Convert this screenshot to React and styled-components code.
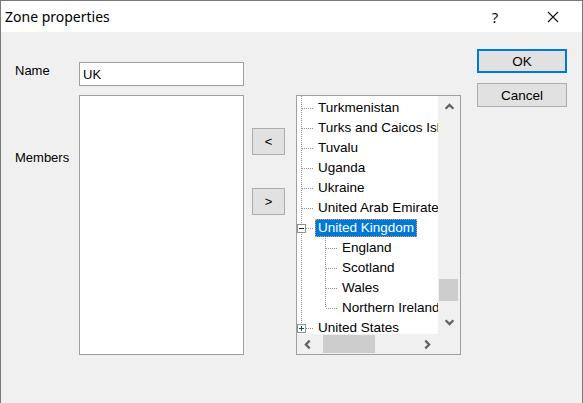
import React from "react";
import styled, { createGlobalStyle, css } from "styled-components";

const GlobalStyle = createGlobalStyle`
	html, body {
		margin: 0;
		padding: 0;
		background: #f0f0f0;
	}
	* {
		box-sizing: border-box;
	}
`;

const dotsV = "repeating-linear-gradient(to bottom, #8f8f8f 0 1px, transparent 1px 2px)";
const dotsH = "repeating-linear-gradient(to right, #8f8f8f 0 1px, transparent 1px 2px)";

const countries = [
	{ label: "Turkmenistan", level: 0 },
	{ label: "Turks and Caicos Islands", level: 0 },
	{ label: "Tuvalu", level: 0 },
	{ label: "Uganda", level: 0 },
	{ label: "Ukraine", level: 0 },
	{ label: "United Arab Emirates", level: 0 },
	{ label: "United Kingdom", level: 0, box: "minus", selected: true },
	{ label: "England", level: 1 },
	{ label: "Scotland", level: 1 },
	{ label: "Wales", level: 1 },
	{ label: "Northern Ireland", level: 1, last: true },
	{ label: "United States", level: 0, box: "plus" },
];

function Chevron({ dir }) {
	const rot = { up: 0, right: 90, down: 180, left: 270 }[dir];
	return (
		<svg width="11" height="11" viewBox="0 0 10 10" style={{ transform: `rotate(${rot}deg)` }}>
			<polyline points="1.5,7 5,3.5 8.5,7" fill="none" stroke="#606060" strokeWidth="2" />
		</svg>
	);
}

function ExpandIcon({ kind }) {
	return (
		<svg width="9" height="9" viewBox="0 0 9 9">
			<rect x="0.5" y="0.5" width="8" height="8" fill="#fff" stroke="#919191" />
			<line x1="2" y1="4.5" x2="7" y2="4.5" stroke={kind === "plus" ? "#1e3a8a" : "#222"} />
			{kind === "plus" && <line x1="4.5" y1="2" x2="4.5" y2="7" stroke="#1e3a8a" />}
		</svg>
	);
}

export default function App() {
	return (
		<>
			<GlobalStyle />
			<Window>
				<TitleBar>
					<Title>Zone properties</Title>
					<CaptionButton>?</CaptionButton>
					<CaptionButton>
						<svg width="12" height="12" viewBox="0 0 12 12">
							<path d="M1 1 L11 11 M11 1 L1 11" stroke="#111" strokeWidth="1.1" />
						</svg>
					</CaptionButton>
				</TitleBar>
				<Body>
					<FormGrid>
						<Label $top={1}>Name</Label>
						<TextInput defaultValue="UK" />
						<Label $top={55}>Members</Label>
						<MemberList />
					</FormGrid>

					<ArrowColumn>
						<SmallButton>&lt;</SmallButton>
						<SmallButton>&gt;</SmallButton>
					</ArrowColumn>

					<Tree>
						<Viewport>
							{countries.map((c) => (
								<Row key={c.label} $level={c.level}>
									<Gutter $level={c.level} $last={c.last}>
										{c.box && <ExpandIcon kind={c.box} />}
									</Gutter>
									<ItemText $selected={c.selected}>{c.label}</ItemText>
								</Row>
							))}
						</Viewport>
						<VScroll>
							<ArrowCell $h={21}><Chevron dir="up" /></ArrowCell>
							<Track>
								<VThumb style={{ marginTop: 162 }} />
							</Track>
							<ArrowCell $h={23}><Chevron dir="down" /></ArrowCell>
						</VScroll>
						<HScroll>
							<ArrowCell $w={21}><Chevron dir="left" /></ArrowCell>
							<HTrack>
								<HThumb style={{ marginLeft: 5 }} />
							</HTrack>
							<ArrowCell $w={21}><Chevron dir="right" /></ArrowCell>
						</HScroll>
						<Corner />
					</Tree>

					<DialogButtons>
						<PushButton $default>OK</PushButton>
						<PushButton>Cancel</PushButton>
					</DialogButtons>
				</Body>
			</Window>
		</>
	);
}

const Window = styled.div`
	width: 583px;
	height: 403px;
	background: #f0f0f0;
	border: 1px solid #7a7a7a;
	border-bottom: none;
	font-family: "Liberation Sans", Arial, sans-serif;
	font-size: 13px;
	color: #000;
	overflow: hidden;
`;

const TitleBar = styled.div`
	height: 31px;
	background: #fff;
	display: flex;
	align-items: center;
	gap: 12px;
	padding-right: 6px;
`;

const Title = styled.div`
	flex: 1;
	padding-left: 4px;
	font-family: "Noto Sans", "Open Sans", sans-serif;
	font-size: 14px;
	color: #000;
`;

const CaptionButton = styled.div`
	width: 46px;
	height: 31px;
	display: flex;
	align-items: center;
	justify-content: center;
	font-family: "Noto Sans", sans-serif;
	font-size: 15px;
	color: #111;
`;

const Body = styled.div`
	display: flex;
	align-items: flex-start;
	padding-left: 14px;
`;

const FormGrid = styled.div`
	display: grid;
	grid-template-columns: 64px 165px;
	grid-template-rows: 24px 260px;
	row-gap: 9px;
	margin-top: 30px;
`;

const Label = styled.div`
	padding-top: ${(p) => p.$top}px;
	line-height: 15px;
`;

const TextInput = styled.input`
	height: 24px;
	width: 100%;
	margin: 0;
	border: 1px solid #a0a0a0;
	background: #fff;
	padding: 0 3px;
	font-family: "Liberation Sans", Arial, sans-serif;
	font-size: 13px;
	color: #000;
	outline: none;
`;

const MemberList = styled.div`
	background: #fff;
	border: 1px solid #a0a0a0;
`;

const ArrowColumn = styled.div`
	display: flex;
	flex-direction: column;
	gap: 33px;
	margin: 96px 0 0 8px;
`;

const buttonFace = css`
	background: #e1e1e1;
	border: 1px solid #adadad;
	display: flex;
	align-items: center;
	justify-content: center;
	font-family: "Liberation Sans", Arial, sans-serif;
	color: #000;
`;

const SmallButton = styled.div`
	${buttonFace};
	width: 33px;
	height: 27px;
	font-size: 13px;
`;

const Tree = styled.div`
	display: grid;
	grid-template-columns: 141px 22px;
	grid-template-rows: 238px 20px;
	width: 165px;
	height: 260px;
	margin: 63px 0 0 11px;
	border: 1px solid #a0a0a0;
	background: #fff;
`;

const Viewport = styled.div`
	overflow: hidden;
	padding-top: 2px;
	background-image: ${dotsV};
	background-size: 1px 100%;
	background-position: 4px 0;
	background-repeat: no-repeat;
	font-size: 13.5px;
`;

const Row = styled.div`
	display: flex;
	align-items: center;
	height: 20px;
	padding-left: ${(p) => p.$level * 24}px;
	white-space: nowrap;
`;

const Gutter = styled.div`
	flex: none;
	width: 18px;
	height: 20px;
	display: flex;
	align-items: center;
	background-repeat: no-repeat;
	background-image: ${(p) => (p.$level > 0 ? `${dotsH}, ${dotsV}` : dotsH)};
	background-size: ${(p) => (p.$level > 0 ? `12px 1px, 1px ${p.$last ? "10px" : "100%"}` : "12px 1px")};
	background-position: ${(p) => (p.$level > 0 ? "5px 10px, 4px 0" : "5px 10px")};
`;

const ItemText = styled.span`
	display: inline-block;
	line-height: 16px;
	padding: 0 2px;
	border: 1px solid transparent;
	${(p) =>
		p.$selected &&
		css`
			background: #0078d7;
			color: #fff;
			border: 1px dotted #f0a040;
		`}
`;

const VScroll = styled.div`
	display: flex;
	flex-direction: column;
	background: #f0f0f0;
`;

const ArrowCell = styled.div`
	flex: none;
	${(p) => p.$h && `height: ${p.$h}px;`}
	${(p) => p.$w && `width: ${p.$w}px;`}
	display: flex;
	align-items: center;
	justify-content: center;
`;

const Track = styled.div`
	flex: 1;
	padding-left: 1px;
`;

const VThumb = styled.div`
	width: 19px;
	height: 22px;
	background: #cdcdcd;
`;

const HScroll = styled.div`
	display: flex;
	background: #f0f0f0;
`;

const HTrack = styled.div`
	flex: 1;
	padding-top: 1px;
`;

const HThumb = styled.div`
	width: 52px;
	height: 18px;
	background: #cdcdcd;
`;

const Corner = styled.div`
	background: #f0f0f0;
`;

const DialogButtons = styled.div`
	display: flex;
	flex-direction: column;
	gap: 10px;
	margin: 17px 0 0 16px;
`;

const PushButton = styled.div`
	${buttonFace};
	width: 90px;
	height: 24px;
	font-size: 13.5px;
	${(p) =>
		p.$default &&
		css`
			border: 2px solid #0078d7;
		`}
`;
